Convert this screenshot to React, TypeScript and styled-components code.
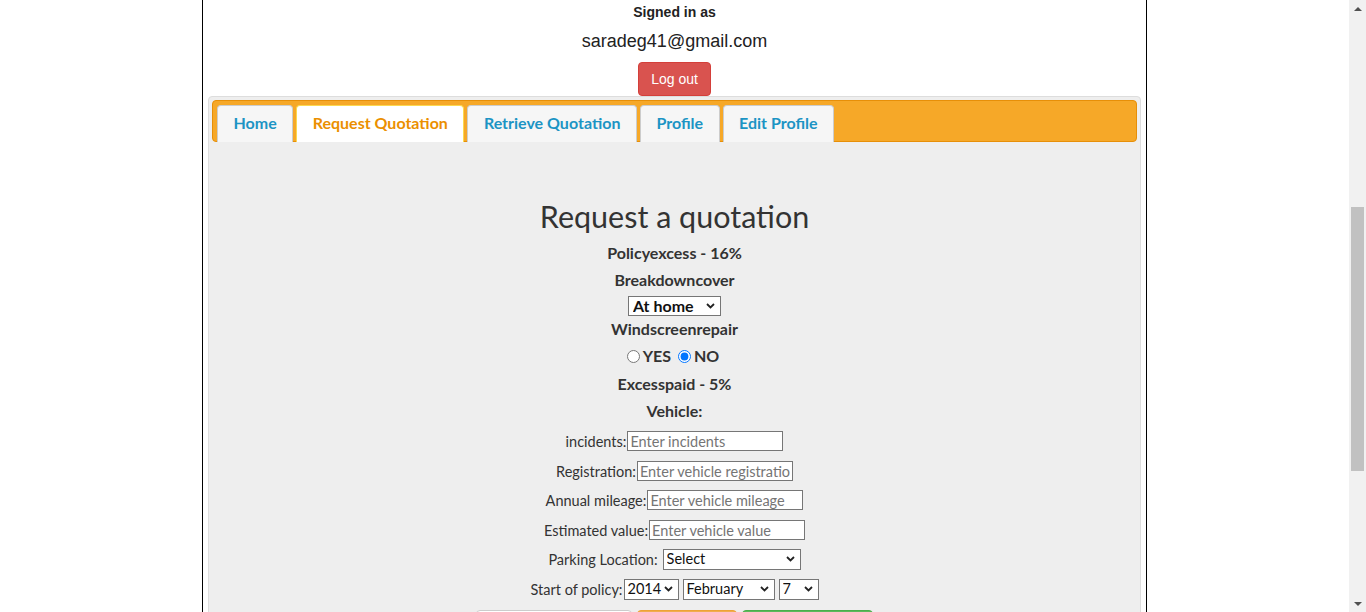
import React, { useLayoutEffect } from "react";
import styled, { createGlobalStyle, css } from "styled-components";

const chevron =
  "url(\"data:image/svg+xml;utf8,<svg xmlns='http://www.w3.org/2000/svg' width='9' height='6' viewBox='0 0 9 6'><path d='M1 1l3.5 3.5 3.5-3.5' fill='none' stroke='%23222' stroke-width='1.8'/></svg>\")";

const Global = createGlobalStyle`
  html { scrollbar-width: none; }
  html::-webkit-scrollbar { display: none; }
  body {
    margin: 0;
    padding-right: 17px;
    background: #fff;
    font-family: "Liberation Sans", Arial, sans-serif;
    color: #333;
  }
`;

const Column = styled.div`
  box-sizing: border-box;
  width: 945px;
  min-height: 1340px;
  margin: 0 auto;
  border-left: 1px solid #000;
  border-right: 1px solid #000;
  background: #fff;
  display: flex;
  flex-direction: column;
`;

const Masthead = styled.div`
  height: 442px;
`;

const UserBox = styled.div`
  display: flex;
  flex-direction: column;
  align-items: center;
`;

const SignedIn = styled.div`
  font-size: 14px;
  font-weight: bold;
  line-height: 20px;
  color: #222;
`;

const Email = styled.div`
  margin-top: 6px;
  font-size: 18px;
  line-height: 26px;
  color: #222;
`;

const LogoutButton = styled.button`
  margin-top: 8px;
  box-sizing: border-box;
  height: 34px;
  padding: 0 12.5px;
  background: #d9534f;
  border: 1px solid #d43f3a;
  border-radius: 4px;
  color: #fff;
  font-family: "Liberation Sans", Arial, sans-serif;
  font-size: 14px;
  cursor: pointer;
`;

const TabsPanel = styled.div`
  margin: 0 5px;
  padding: 3px;
  border: 1px solid #ddd;
  border-radius: 4px;
  background: #eee;
  font-family: Lato, "DejaVu Sans", sans-serif;
  color: #333;
  flex: 1;
`;

const TabBar = styled.ul`
  display: flex;
  gap: 3px;
  margin: 0;
  padding: 4px 4px 0;
  list-style: none;
  height: 36px;
  border: 1px solid #e78f08;
  border-radius: 4px;
  background: #f6a828;
`;

const Tab = styled.li<{ $active?: boolean }>`
  box-sizing: border-box;
  height: 37px;
  padding: 0 15.5px;
  border: 1px solid #ccc;
  border-bottom: none;
  border-radius: 4px 4px 0 0;
  background: #f6f6f6;
  color: #1c94c4;
  font-size: 16px;
  font-weight: bold;
  line-height: 33px;
  white-space: nowrap;
  ${(p) =>
    p.$active &&
    css`
      background: #fff;
      border-color: #fbd850;
      color: #eb8f00;
    `}
`;

const Form = styled.div`
  display: flex;
  flex-direction: column;
  align-items: center;
  padding-top: 56px;
`;

const Title = styled.h1`
  margin: 0;
  font-size: 30.5px;
  font-weight: normal;
  line-height: 36px;
  color: #333;
`;

const Line = styled.div<{ $top: number }>`
  margin-top: ${(p) => p.$top}px;
  height: 20px;
  display: flex;
  align-items: center;
  gap: 4px;
  font-size: 16px;
  font-weight: bold;
  line-height: 20px;
  white-space: nowrap;
`;

const Field = styled.div<{ $top: number }>`
  margin-top: ${(p) => p.$top}px;
  height: 20px;
  display: flex;
  align-items: center;
  font-size: 14.5px;
  white-space: nowrap;
`;

const Label = styled.span<{ $gap?: number }>`
  margin-right: ${(p) => p.$gap ?? 1}px;
`;

const TextInput = styled.input`
  box-sizing: border-box;
  width: 156px;
  height: 20px;
  padding: 0 2px;
  border: 1px solid #767676;
  background: #fff;
  font-family: Lato, "DejaVu Sans", sans-serif;
  font-size: 14.5px;
  color: #333;
  &::placeholder {
    color: #757575;
  }
`;

const Select = styled.select<{ $w: number; $bold?: boolean }>`
  box-sizing: border-box;
  appearance: none;
  -webkit-appearance: none;
  width: ${(p) => p.$w}px;
  height: ${(p) => (p.$bold ? 20 : 21)}px;
  padding: 0 16px 0 ${(p) => (p.$bold ? 4 : 3)}px;
  border: 1px solid #767676;
  border-radius: 0;
  background: #fff ${chevron} no-repeat right 5px center;
  font-family: Lato, "DejaVu Sans", sans-serif;
  font-size: ${(p) => (p.$bold ? 16 : 14.5)}px;
  font-weight: ${(p) => (p.$bold ? "bold" : "normal")};
  line-height: 18px;
  color: #111;
`;

const Radio = styled.input`
  margin: 0 3px 0 0;
  width: 13px;
  height: 13px;
`;

const RadioLabel = styled.label`
  display: inline-flex;
  align-items: center;
  margin-right: 3px;
`;

const Actions = styled.div`
  margin-top: 11px;
  display: flex;
  gap: 5px;
`;

const ActionButton = styled.button<{ $kind: "default" | "warning" | "success"; $w: number }>`
  box-sizing: border-box;
  width: ${(p) => p.$w}px;
  height: 34px;
  border-radius: 4px;
  font-family: "Liberation Sans", Arial, sans-serif;
  font-size: 14px;
  ${(p) =>
    p.$kind === "default"
      ? css`
          background: #fff;
          border: 1px solid #ccc;
          color: #333;
        `
      : p.$kind === "warning"
      ? css`
          background: #f0ad4e;
          border: 1px solid #eea236;
          color: #fff;
        `
      : css`
          background: #5cb85c;
          border: 1px solid #4cae4c;
          color: #fff;
        `}
`;

/* Browser scrollbar, drawn over the right edge of the window */
const ScrollRail = styled.div`
  position: fixed;
  top: 0;
  right: 0;
  width: 17px;
  height: 100vh;
  background: #f1f1f1;
  display: grid;
  grid-template-rows: 17px 190px 264px 1fr 17px;
  justify-items: center;
  z-index: 10;
`;

const ScrollArrow = styled.div<{ $down?: boolean }>`
  grid-row: ${(p) => (p.$down ? 5 : 1)};
  align-self: center;
  width: 0;
  height: 0;
  border-left: 4px solid transparent;
  border-right: 4px solid transparent;
  ${(p) =>
    p.$down
      ? css`
          border-top: 4px solid #505050;
        `
      : css`
          border-bottom: 4px solid #505050;
        `}
`;

const ScrollThumb = styled.div`
  grid-row: 3;
  width: 13px;
  height: 100%;
  background: #c1c1c1;
`;

const tabs = ["Home", "Request Quotation", "Retrieve Quotation", "Profile", "Edit Profile"];

export default function App() {
  useLayoutEffect(() => {
    window.scrollTo(0, 440);
  }, []);

  return (
    <>
      <Global />
      <Column>
        <Masthead />
        <UserBox>
          <SignedIn>Signed in as</SignedIn>
          <Email>saradeg41@gmail.com</Email>
          <LogoutButton>Log out</LogoutButton>
        </UserBox>
        <TabsPanel>
          <TabBar>
            {tabs.map((t) => (
              <Tab key={t} $active={t === "Request Quotation"}>
                {t}
              </Tab>
            ))}
          </TabBar>
          <Form>
            <Title>Request a quotation</Title>
            <Line $top={9}>Policyexcess - 16%</Line>
            <Line $top={7}>Breakdowncover</Line>
            <Line $top={6}>
              <Select $w={93} $bold defaultValue="home">
                <option value="home">At home</option>
                <option value="road">Roadside</option>
              </Select>
            </Line>
            <Line $top={3}>Windscreenrepair</Line>
            <Line $top={7}>
              <RadioLabel>
                <Radio type="radio" name="ws" />
                YES
              </RadioLabel>
              <RadioLabel>
                <Radio type="radio" name="ws" defaultChecked />
                NO
              </RadioLabel>
            </Line>
            <Line $top={8}>Excesspaid - 5%</Line>
            <Line $top={7}>Vehicle:</Line>
            <Field $top={10}>
              <Label>incidents:</Label>
              <TextInput placeholder="Enter incidents" />
            </Field>
            <Field $top={10}>
              <Label>Registration:</Label>
              <TextInput placeholder="Enter vehicle registration" />
            </Field>
            <Field $top={9}>
              <Label>Annual mileage:</Label>
              <TextInput placeholder="Enter vehicle mileage" />
            </Field>
            <Field $top={10}>
              <Label>Estimated value:</Label>
              <TextInput placeholder="Enter vehicle value" />
            </Field>
            <Field $top={9}>
              <Label $gap={5}>Parking Location:</Label>
              <Select $w={138} defaultValue="">
                <option value="">Select</option>
                <option value="garage">Garage</option>
                <option value="street">Street</option>
              </Select>
            </Field>
            <Field $top={10}>
              <Label>Start of policy:</Label>
              <Select $w={55} defaultValue="2014">
                <option>2014</option>
              </Select>
              <Label $gap={4} />
              <Select $w={92} defaultValue="February">
                <option>February</option>
              </Select>
              <Label $gap={4} />
              <Select $w={40} defaultValue="7">
                <option>7</option>
              </Select>
            </Field>
            <Actions>
              <ActionButton $kind="default" $w={156}>Back to profile</ActionButton>
              <ActionButton $kind="warning" $w={100}>Reset</ActionButton>
              <ActionButton $kind="success" $w={131}>Get quotation</ActionButton>
            </Actions>
          </Form>
        </TabsPanel>
      </Column>
      <ScrollRail aria-hidden>
        <ScrollArrow />
        <ScrollThumb />
        <ScrollArrow $down />
      </ScrollRail>
    </>
  );
}
